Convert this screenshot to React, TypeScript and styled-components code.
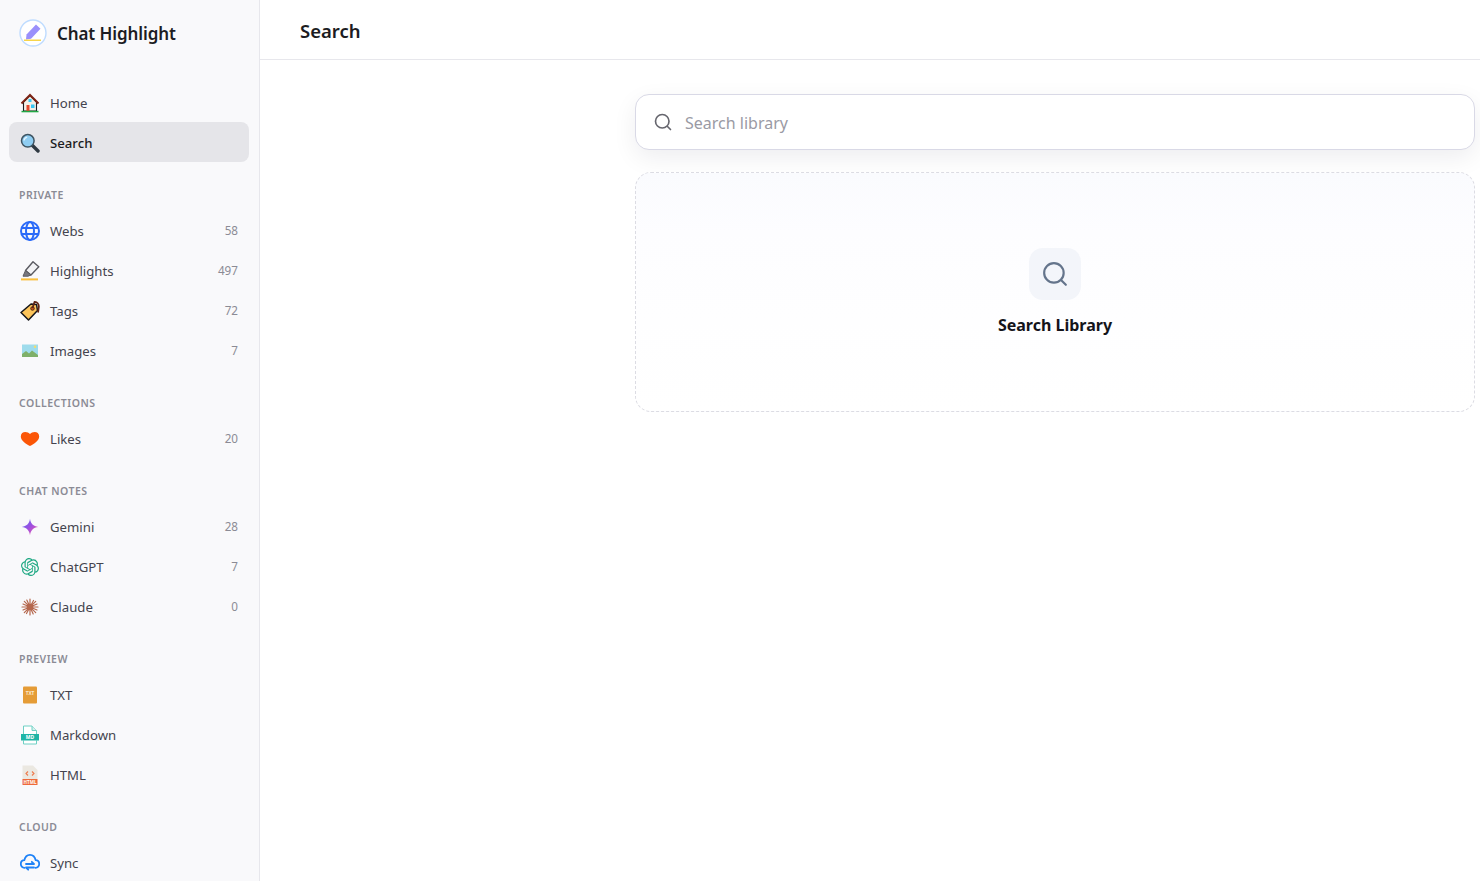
import type { ReactNode } from "react";
import styled, { createGlobalStyle } from "styled-components";
import { SiOpenai } from "react-icons/si";

const GlobalStyle = createGlobalStyle`
  html, body {
    margin: 0;
    padding: 0;
    background: #ffffff;
    font-family: "Noto Sans", "Open Sans", sans-serif;
  }
  * {
    box-sizing: border-box;
  }
`;

const Page = styled.div`
  display: flex;
  height: 100vh;
  overflow: hidden;
`;

const Sidebar = styled.aside`
  flex: 0 0 260px;
  height: 100%;
  overflow: hidden;
  background: #f9f9fb;
  border-right: 1px solid #e7e7ec;
  padding: 0 10px 0 9px;
`;

const Brand = styled.div`
  display: flex;
  align-items: center;
  gap: 10px;
  height: 66px;
  padding-left: 10px;
  margin-bottom: 16px;
`;

const BrandName = styled.div`
  font-size: 17px;
  font-weight: 600;
  letter-spacing: -0.1px;
  color: #1c1c22;
`;

const TopNav = styled.nav`
  padding-bottom: 1px;
`;

const Section = styled.section`
  margin-top: 24px;
`;

const SectionLabel = styled.div`
  height: 16px;
  line-height: 16px;
  margin: 0 0 8px 10px;
  font-size: 10.5px;
  font-weight: 600;
  letter-spacing: 0.5px;
  text-transform: uppercase;
  color: #8b8b95;
`;

const Row = styled.div<{ $active?: boolean }>`
  display: flex;
  align-items: center;
  gap: 10px;
  height: 40px;
  padding: 0 11px;
  border-radius: 8px;
  background: ${(p) => (p.$active ? "#e5e5e9" : "transparent")};
  color: ${(p) => (p.$active ? "#1c1c22" : "#44444e")};
  font-size: 13.2px;
  font-weight: ${(p) => (p.$active ? 500 : 400)};
`;

const TopRow = styled(Row)`
  padding-top: 2px;
`;

const IconBox = styled.span`
  display: flex;
  align-items: center;
  justify-content: center;
  flex: 0 0 20px;
  width: 20px;
  height: 20px;
`;

const RowLabel = styled.span`
  flex: 1;
`;

const Count = styled.span`
  padding-bottom: 2px;
  font-size: 11.7px;
  color: #8b8b95;
`;

const Main = styled.main`
  flex: 1;
  min-width: 0;
`;

const Header = styled.header`
  display: flex;
  align-items: center;
  height: 60px;
  padding: 2px 40px 0;
  border-bottom: 1px solid #e7e7ec;
`;

const Title = styled.h1`
  margin: 0;
  font-size: 18.5px;
  font-weight: 600;
  color: #1c1c22;
`;

const Content = styled.div`
  display: flex;
  flex-direction: column;
  gap: 22px;
  padding: 34px 5px 0 375px;
`;

const SearchBox = styled.div`
  display: flex;
  align-items: center;
  gap: 13px;
  height: 56px;
  padding: 0 18px;
  background: #ffffff;
  border: 1px solid #d9d9e6;
  border-radius: 14px;
  box-shadow: 0 8px 24px rgba(20, 20, 40, 0.07);
`;

const SearchInput = styled.input`
  flex: 1;
  border: 0;
  outline: 0;
  padding: 2px 0 0;
  background: transparent;
  font-family: inherit;
  font-size: 16px;
  color: #1c1c22;
  &::placeholder {
    color: #9a9aa4;
    opacity: 1;
  }
`;

const EmptyCard = styled.div`
  display: flex;
  flex-direction: column;
  align-items: center;
  height: 240px;
  padding-top: 75px;
  background: linear-gradient(#fafbfe, #fdfdff 25%, #ffffff);
  border: 1px dashed #dcdce3;
  border-radius: 16px;
`;

const EmptyIcon = styled.div`
  display: flex;
  align-items: center;
  justify-content: center;
  width: 52px;
  height: 52px;
  border-radius: 14px;
  background: #f3f5fa;
`;

const EmptyTitle = styled.div`
  margin-top: 14px;
  font-size: 16px;
  font-weight: 700;
  color: #14141a;
`;

const LogoMark = () => (
  <svg width="28" height="28" viewBox="0 0 28 28">
    <circle cx="14" cy="14" r="13" fill="#fff" stroke="#bfdcff" strokeWidth="1.4" />
    <path d="M7.5 15.500 17 5.500 21.500 9.800 12 19.800 7 20.500Z" fill="#9a90fb" />
    <rect x="5" y="20.500" width="17" height="1.500" fill="#f7d54a" />
  </svg>
);

const HomeIcon = () => (
  <svg width="20" height="20" viewBox="0 0 20 20">
    <path d="M3.500 9v9h13V9L10 2.500Z" fill="#f3efe6" stroke="#1c1c22" strokeWidth="1.100" />
    <path d="M1.500 10.500 10 2l8.500 8.500" fill="none" stroke="#7c2415" strokeWidth="2" />
    <rect x="6.500" y="12" width="3" height="6.500" fill="#e5482d" />
    <rect x="11" y="11.500" width="3.500" height="3.500" fill="#38c6f4" />
    <rect x="8.500" y="6" width="3" height="3" fill="#38c6f4" />
    <rect x="1.500" y="17.800" width="17" height="1.500" fill="#22a845" />
  </svg>
);

const LensIcon = () => (
  <svg width="20" height="20" viewBox="0 0 20 20">
    <path d="M12 12 18 18" stroke="#2f3942" strokeWidth="3.400" strokeLinecap="round" />
    <circle cx="7.800" cy="7.800" r="6.300" fill="#8fcdf2" stroke="#3f5563" strokeWidth="1.500" />
    <path d="M4 7.500a4 4 0 0 1 3.200-3.300" fill="none" stroke="#e3f5ff" strokeWidth="1.300" />
  </svg>
);

const GlobeIcon = () => (
  <svg width="20" height="20" viewBox="0 0 20 20" fill="none" stroke="#2b6bf8" strokeWidth="2">
    <circle cx="10" cy="10" r="9" />
    <ellipse cx="10" cy="10" rx="4" ry="9" />
    <path d="M1.500 7h17M1.500 13h17" />
  </svg>
);

const MarkerIcon = () => (
  <svg width="20" height="20" viewBox="0 0 20 20">
    <path d="M13 .8 18.800 5.800 11 14 5.500 9.500Z" fill="#f3f3f5" stroke="#5a5a60" strokeWidth="1.400" strokeLinejoin="round" />
    <path d="M5.500 9.500 3 15.200h5l3-1.200Z" fill="#77777e" stroke="#5a5a60" strokeWidth="1" strokeLinejoin="round" />
    <rect x="1" y="17.400" width="17" height="2" fill="#fbbf3c" />
  </svg>
);

const TagIcon = () => (
  <svg width="20" height="20" viewBox="0 0 20 20">
    <path d="M1 11.500 11 3l5.500.5 1 6L8.500 19Z" fill="#fcc45a" stroke="#16161a" strokeWidth="1.500" strokeLinejoin="round" />
    <circle cx="12.500" cy="7.500" r="1.800" fill="#c4541c" stroke="#3c1c0c" strokeWidth="0.800" />
    <path d="M12.500 7 14.500 1c2.500-.3 4.600 2 4.300 5l-.8 5.500" fill="none" stroke="#5f2516" strokeWidth="1.800" />
  </svg>
);

const ImageIcon = () => (
  <svg width="20" height="20" viewBox="0 0 20 20">
    <rect x="2" y="3.500" width="16" height="12.500" fill="#9fdcec" />
    <circle cx="15" cy="5.800" r="1.200" fill="#f6dc6b" />
    <path d="M2 16v-3l4-3 3 2.600 3-3 6 4.400v2Z" fill="#7fb069" />
  </svg>
);

const HeartIcon = () => (
  <svg width="20" height="20" viewBox="0 0 20 20">
    <path d="M10 17C6 14.600.8 11.800.8 7.400.8 4.500 3 3 5.200 3 7.200 3 8.900 3.800 10 5 11.100 3.800 12.800 3 14.800 3 17 3 19.200 4.500 19.200 7.400 19.200 11.800 14 14.600 10 17Z" fill="#fb5607" />
  </svg>
);

const GeminiIcon = () => (
  <svg width="20" height="20" viewBox="0 0 20 20">
    <defs>
      <linearGradient id="gem" x1="0" y1="0" x2="1" y2="1">
        <stop offset="0" stopColor="#4f6cf5" />
        <stop offset="0.5" stopColor="#a04ee0" />
        <stop offset="1" stopColor="#f8609a" />
      </linearGradient>
    </defs>
    <path d="M10 1.800c.6 4.800 3.400 7.600 8.200 8.200-4.800.6-7.600 3.400-8.200 8.200-.6-4.800-3.400-7.600-8.200-8.200 4.800-.6 7.600-3.400 8.200-8.200Z" fill="url(#gem)" />
  </svg>
);

const ClaudeIcon = () => (
  <svg width="20" height="20" viewBox="0 0 20 20" stroke="#b5674d" strokeWidth="1.200" strokeLinecap="round">
    <circle cx="10" cy="10" r="3.200" fill="#b5674d" stroke="none" />
    <path d="M10 2v16M2 10h16M4.300 4.300l11.400 11.400M15.700 4.300 4.300 15.700M6.800 3l6.400 14M13.500 3.500 6.500 16.500M3 7l14 6M17 7 3 13" />
  </svg>
);

const TxtIcon = () => (
  <svg width="20" height="20" viewBox="0 0 20 20">
    <rect x="3" y="1.500" width="14" height="17" rx="1" fill="#e59c37" />
    <text x="10" y="9.500" textAnchor="middle" fontSize="4.800" fontWeight="700" fill="#fbe9cc">TXT</text>
  </svg>
);

const MdIcon = () => (
  <svg width="20" height="20" viewBox="0 0 20 20">
    <path d="M3.500 9.500V1h8.500l4.500 4.500v4M3.500 15.500v3.500h13v-3.500" fill="#ffffff" stroke="#6fd0c4" strokeWidth="1" />
    <path d="M12 1v4.500h4.500" fill="#d5f1ed" stroke="#6fd0c4" strokeWidth="1" />
    <rect x="1" y="9" width="18" height="6.500" fill="#1fb5a6" />
    <text x="10" y="14" textAnchor="middle" fontSize="5" fontWeight="700" fill="#ffffff">MD</text>
  </svg>
);

const HtmlIcon = () => (
  <svg width="20" height="20" viewBox="0 0 20 20">
    <path d="M2.500.5h10.500l4.500 4.500v9.500h-15Z" fill="#ebe8e1" />
    <path d="m8 6.500-2 2 2 2M12 6.500l2 2-2 2" fill="none" stroke="#ee7a4c" strokeWidth="1.100" />
    <rect x="2.500" y="14" width="15" height="6" fill="#ee6a3c" />
    <text x="10" y="18.600" textAnchor="middle" fontSize="4.500" fontWeight="700" fill="#ffffff">HTML</text>
  </svg>
);

const CloudIcon = () => (
  <svg width="20" height="20" viewBox="0 0 20 20" fill="none" stroke="#1e82f7" strokeWidth="1.800" strokeLinecap="round" strokeLinejoin="round">
    <path d="M4.500 14.800C2.300 14.400.800 13 .800 10.900c0-2 1.500-3.500 3.500-3.700C5 4 7.200 1.800 10 1.800s5 2.200 5.700 5.400c2 .2 3.500 1.700 3.500 3.700 0 2.100-1.500 3.500-3.700 3.900" />
    <path d="M6 11h8l-2.200-2.200M14 14.500H6l2.200 2.200" />
  </svg>
);

const SearchGlyph = ({ size, color, stroke }: { size: number; color: string; stroke: number }) => (
  <svg width={size} height={size} viewBox="0 0 24 24" fill="none" stroke={color} strokeWidth={stroke} strokeLinecap="round">
    <circle cx="11" cy="11" r="9" />
    <path d="m18 18 4 4" />
  </svg>
);

type NavItem = { icon: ReactNode; label: string; count?: number };

const sections: { title: string; items: NavItem[] }[] = [
  {
    title: "Private",
    items: [
      { icon: <GlobeIcon />, label: "Webs", count: 58 },
      { icon: <MarkerIcon />, label: "Highlights", count: 497 },
      { icon: <TagIcon />, label: "Tags", count: 72 },
      { icon: <ImageIcon />, label: "Images", count: 7 },
    ],
  },
  {
    title: "Collections",
    items: [{ icon: <HeartIcon />, label: "Likes", count: 20 }],
  },
  {
    title: "Chat Notes",
    items: [
      { icon: <GeminiIcon />, label: "Gemini", count: 28 },
      { icon: <SiOpenai size={18} color="#1fa883" />, label: "ChatGPT", count: 7 },
      { icon: <ClaudeIcon />, label: "Claude", count: 0 },
    ],
  },
  {
    title: "Preview",
    items: [
      { icon: <TxtIcon />, label: "TXT" },
      { icon: <MdIcon />, label: "Markdown" },
      { icon: <HtmlIcon />, label: "HTML" },
    ],
  },
  {
    title: "Cloud",
    items: [{ icon: <CloudIcon />, label: "Sync" }],
  },
];

const NavRow = ({ icon, label, count }: NavItem) => (
  <Row>
    <IconBox>{icon}</IconBox>
    <RowLabel>{label}</RowLabel>
    {count !== undefined && <Count>{count}</Count>}
  </Row>
);

export default function App() {
  return (
    <Page>
      <GlobalStyle />
      <Sidebar>
        <Brand>
          <LogoMark />
          <BrandName>Chat Highlight</BrandName>
        </Brand>
        <TopNav>
          <TopRow>
            <IconBox>
              <HomeIcon />
            </IconBox>
            <RowLabel>Home</RowLabel>
          </TopRow>
          <TopRow $active>
            <IconBox>
              <LensIcon />
            </IconBox>
            <RowLabel>Search</RowLabel>
          </TopRow>
        </TopNav>
        {sections.map((section) => (
          <Section key={section.title}>
            <SectionLabel>{section.title}</SectionLabel>
            {section.items.map((item) => (
              <NavRow key={item.label} {...item} />
            ))}
          </Section>
        ))}
      </Sidebar>
      <Main>
        <Header>
          <Title>Search</Title>
        </Header>
        <Content>
          <SearchBox>
            <SearchGlyph size={18} color="#66666e" stroke={2.2} />
            <SearchInput placeholder="Search library" />
          </SearchBox>
          <EmptyCard>
            <EmptyIcon>
              <SearchGlyph size={26} color="#64748b" stroke={2} />
            </EmptyIcon>
            <EmptyTitle>Search Library</EmptyTitle>
          </EmptyCard>
        </Content>
      </Main>
    </Page>
  );
}
